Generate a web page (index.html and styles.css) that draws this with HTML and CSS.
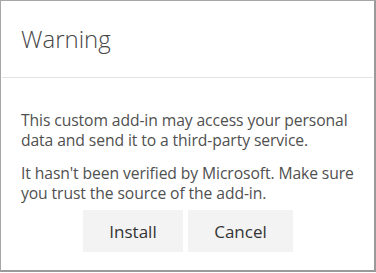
FILE: index.html
```html
<!DOCTYPE html>
<html>
<head>
<meta charset="utf-8">
<link rel="stylesheet" href="styles.css">
</head>
<body>
<div class="dialog">
  <div class="header">
    <h1 class="title">Warning</h1>
  </div>
  <div class="content">
    <p class="msg">This custom add-in may access your personal data and send it to a third-party service.</p>
    <p class="msg">It hasn't been verified by Microsoft. Make sure you trust the source of the add-in.</p>
    <div class="actions">
      <button class="btn btn-install">Install</button>
      <button class="btn btn-cancel">Cancel</button>
    </div>
  </div>
</div>
</body>
</html>
```
FILE: styles.css
```css
html, body {
  margin: 0;
  padding: 0;
  background: #ffffff;
}
.dialog {
  box-sizing: border-box;
  width: 376px;
  height: 272px;
  border-top: 1px solid #a6a6a6;
  border-left: 1px solid #a6a6a6;
  border-right: 2px solid #9a9a9a;
  border-bottom: 2px solid #9a9a9a;
  font-family: "Open Sans", "Noto Sans", sans-serif;
  color: #444444;
}
.header {
  height: 76px;
  margin: 0 1px;
  border-bottom: 1px solid #e3e3e3;
  display: flex;
  align-items: center;
}
.title {
  margin: 0 0 0 19px;
  font-weight: 300;
  font-size: 24px;
  color: #474747;
  line-height: 30px;
}
.content {
  padding: 32px 19px 0 20px;
}
.msg {
  margin: 0 0 13px 0;
  font-size: 15.7px;
  line-height: 20px;
  color: #505050;
  letter-spacing: -0.1px;
}
.msg:last-of-type {
  margin-bottom: 0;
}
.actions {
  display: flex;
  justify-content: center;
  gap: 5px;
  margin-top: 7px;
}
.btn {
  border: none;
  background: #f3f3f3;
  height: 42px;
  font-family: "Open Sans", "Noto Sans", sans-serif;
  font-size: 17px;
  color: #333333;
  padding: 0;
}
.btn-install { width: 100px; }
.btn-cancel { width: 105px; }
```
